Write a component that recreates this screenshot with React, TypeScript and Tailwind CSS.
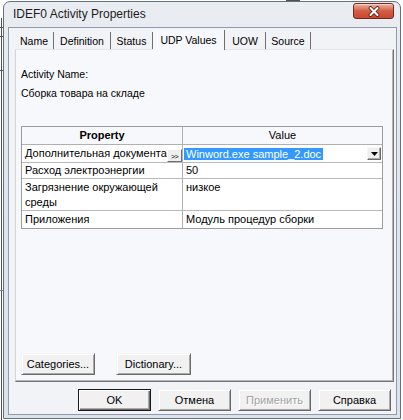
import React from "react";

const btn =
  "h-[22px] flex items-center justify-center text-[11px] leading-[13px] bg-[#f1f1f1] border border-t-[#f4f4f4] border-l-[#f4f4f4] border-r-[#6a6a6a] border-b-[#6a6a6a] shadow-[inset_1px_1px_0_#ffffff,inset_-1px_-1px_0_#a9a9a9]";

function Tab({ label, w, selected }: { label: string; w: number; selected?: boolean }) {
  if (selected) {
    return (
      <div
        className="relative z-10 -mb-px h-[20px] flex items-center justify-center bg-[#f7f8fb] border-r border-r-[#6e6e6e] text-[10.5px] leading-[13px]"
        style={{ width: w }}
      >
        {label}
      </div>
    );
  }
  return (
    <div
      className="h-[17px] pt-[2px] flex items-center justify-center border-r border-r-[#707070] text-[10.5px] leading-[13px]"
      style={{ width: w }}
    >
      {label}
    </div>
  );
}

export default function App() {
  return (
    <div className="relative w-[403px] h-[420px] bg-white overflow-hidden font-['Liberation_Sans',Arial,sans-serif] text-black">
      {/* background window edge */}
      <div className="absolute left-[1px] top-[18px] w-px h-[402px] bg-[#505050]" />
      <div className="absolute left-0 top-[27px] w-[3px] h-px bg-[#505050]" />
      <div className="absolute left-0 top-[36px] w-[3px] h-px bg-[#505050]" />
      <div className="absolute left-0 top-[70px] w-[3px] h-px bg-[#505050]" />
      <div className="absolute left-0 top-[290px] w-[3px] h-px bg-[#808080]" />
      <div className="absolute left-[286px] top-0 w-[14px] h-px bg-[#505050]" />

      {/* window */}
      <div className="ml-[3px] mt-[1px] w-[398px] h-[418px] flex flex-col border border-[#62717f] rounded-t-[7px] bg-gradient-to-b from-[#e9edf2] via-[#dfe5ec] to-[#dbe2ea]">
        {/* title bar */}
        <div className="h-[25px] flex items-start">
          <div className="pl-[9px] pt-[5px] text-[12px] leading-[14px] text-[#1c1c1c]">
            IDEF0 Activity Properties
          </div>
          <div className="ml-auto mr-[6px] mt-[1px] w-[41px] h-[16px] rounded-[3px] border border-[#6f2b20] bg-gradient-to-b from-[#eab3a5] via-[#d45b42] to-[#c8482f] shadow-[inset_0_1px_0_#f6d2c8] flex items-center justify-center">
            <svg width="14" height="11" viewBox="0 0 14 11">
              <path d="M3.5 2 L10.5 9 M10.5 2 L3.5 9" stroke="#5a1d14" strokeWidth="3.8" strokeLinecap="round" />
              <path d="M3.5 2 L10.5 9 M10.5 2 L3.5 9" stroke="#ffffff" strokeWidth="2.1" strokeLinecap="round" />
            </svg>
          </div>
        </div>

        {/* client area */}
        <div className="ml-[4px] mr-[3px] mb-[3px] flex-1 flex flex-col border border-[#8f9baa] bg-[#f2f3f7]">
          {/* tabs */}
          <div className="pt-[1px] pl-[6px] h-[21px] flex items-end">
            <Tab label="Name" w={39} />
            <Tab label="Definition" w={57} />
            <Tab label="Status" w={42} />
            <Tab label="UDP Values" w={72} selected />
            <Tab label="UOW" w={41} />
            <Tab label="Source" w={45} />
          </div>

          {/* panel */}
          <div className="ml-[6px] mr-[2px] h-[333px] flex flex-col bg-[#f7f8fb] border border-t-[#e6e6e6] border-l-[#d4d4d4] border-r-[#767676] border-b-[#767676] shadow-[inset_-1px_-1px_0_#b4b4b4] pl-[5px]">
            <div className="pt-[18px] text-[10.5px] leading-[13px]">Activity Name:</div>
            <div className="mt-[6px] text-[10.5px] leading-[13px]">Сборка товара на складе</div>

            {/* table */}
            <div className="mt-[26px] w-[362px] border border-[#9c9c9c] bg-white text-[11px] leading-[13px]">
              <div className="flex h-[18px] border-b border-b-[#b0b0b0] bg-[#f7f8fb]">
                <div className="w-[161px] border-r border-r-[#b0b0b0] flex items-center justify-center font-bold">
                  Property
                </div>
                <div className="flex-1 flex items-center justify-center">Value</div>
              </div>

              <div className="flex h-[18px] border-b border-b-[#b8b8b8]">
                <div className="w-[161px] border-r border-r-[#b0b0b0] flex items-stretch overflow-hidden">
                  <div className="flex-1 pl-[3px] flex items-center whitespace-nowrap overflow-hidden">
                    Дополнительная документа
                  </div>
                  <div className="mt-[4px] w-[15px] h-[13px] bg-[#efefef] border border-t-[#ffffff] border-l-[#ffffff] border-r-[#707070] border-b-[#707070] flex items-end justify-center text-[7px] leading-[8px] tracking-[-0.5px]">
                    &gt;&gt;
                  </div>
                </div>
                <div className="flex-1 flex items-center pl-[1px] pr-[1px]">
                  <div className="h-[12px] bg-[#3399ff] text-white text-[11px] leading-[12px] px-[2px] whitespace-nowrap">
                    Winword.exe sample_2.doc
                  </div>
                  <div className="ml-auto w-[14px] h-[13px] bg-[#efefef] border border-t-[#f8f8f8] border-l-[#f8f8f8] border-r-[#6a6a6a] border-b-[#6a6a6a] shadow-[inset_-1px_-1px_0_#a9a9a9] flex items-center justify-center">
                    <svg width="7" height="4" viewBox="0 0 7 4">
                      <path d="M0 0 H7 L3.5 4 Z" fill="#000" />
                    </svg>
                  </div>
                </div>
              </div>

              <div className="flex h-[16px] border-b border-b-[#b8b8b8]">
                <div className="w-[161px] border-r border-r-[#b0b0b0] pl-[3px] flex items-center">
                  Расход электроэнергии
                </div>
                <div className="flex-1 pl-[3px] flex items-center">50</div>
              </div>

              <div className="flex h-[32px] border-b border-b-[#b8b8b8] leading-[15px]">
                <div className="w-[161px] border-r border-r-[#b0b0b0] pl-[3px] pt-[1px]">
                  Загрязнение окружающей
                  <br />
                  среды
                </div>
                <div className="flex-1 pl-[3px] pt-[1px]">низкое</div>
              </div>

              <div className="flex h-[17px]">
                <div className="w-[161px] border-r border-r-[#b0b0b0] pl-[3px] flex items-center">
                  Приложения
                </div>
                <div className="flex-1 pl-[3px] flex items-center">Модуль процедур сборки</div>
              </div>
            </div>

            <div className="mt-auto mb-[6px] flex gap-[21px]">
              <div className={btn + " w-[74px]"}>Categories...</div>
              <div className={btn + " w-[75px]"}>Dictionary...</div>
            </div>
          </div>

          {/* bottom buttons */}
          <div className="mt-[7px] pr-[5px] flex justify-end gap-[7px]">
            <div className="w-[73px] h-[22px] flex items-center justify-center text-[11px] leading-[13px] bg-[#f1f1f1] border border-[#1a1a1a] shadow-[inset_1px_1px_0_#ffffff,inset_-1px_-1px_0_#6a6a6a,inset_-2px_-2px_0_#a9a9a9]">
              OK
            </div>
            <div className={btn + " w-[73px]"}>Отмена</div>
            <div className={btn + " w-[73px] text-[#a3a3a3] [text-shadow:1px_1px_0_#ffffff]"}>Применить</div>
            <div className={btn + " w-[73px]"}>Справка</div>
          </div>
        </div>
      </div>
    </div>
  );
}
